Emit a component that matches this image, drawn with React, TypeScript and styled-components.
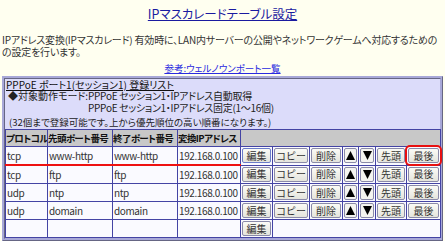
import React from "react";
import styled, { createGlobalStyle } from "styled-components";

const Global = createGlobalStyle`
  html, body { margin: 0; padding: 0; background: #fffff0; }
  body {
    font-family: "Noto Sans CJK JP", "Noto Sans", sans-serif;
    font-feature-settings: "palt";
    color: #333;
    width: 445px;
    overflow: hidden;
  }
`;

const Page = styled.div`
  padding: 0 2px;
  display: flex;
  flex-direction: column;
`;

const Title = styled.a`
  align-self: center;
  margin-top: 6px;
  font-size: 12.5px;
  line-height: 16px;
  color: #1a1aa0;
  text-decoration: underline;
`;

const Desc = styled.p`
  margin: 12px 0 0;
  font-size: 10px;
  line-height: 12px;
  letter-spacing: -0.2px;
  white-space: nowrap;
`;

const RefLink = styled.a`
  align-self: center;
  margin-top: 4px;
  font-size: 9.5px;
  line-height: 12px;
  color: #2a2ae0;
  text-decoration: underline;
`;

const Panel = styled.div`
  margin-top: 2px;
  border: 3px ridge #a8a8d8;
  background: #dcdcfa;
  display: flex;
  flex-direction: column;
`;

const PanelHead = styled.div`
  align-self: flex-start;
  padding: 0 0 0 1px;
  font-size: 10px;
  line-height: 11px;
  color: #111;
  text-decoration: underline;
`;

const ModeGrid = styled.div`
  display: grid;
  grid-template-columns: auto auto;
  justify-content: start;
  padding-left: 3px;
  font-size: 10px;
  line-height: 12px;
  color: #222;
`;

const ModeValue = styled.div<{ $row: number }>`
  grid-column: 2;
  grid-row: ${(p) => p.$row};
  letter-spacing: -0.3px;
`;

const Note = styled.div`
  padding: 2px 0 1px 4px;
  font-size: 9.5px;
  line-height: 12px;
  color: #222;
`;

const Table = styled.table`
  width: 100%;
  table-layout: fixed;
  border-collapse: collapse;
  border: 1px solid #4444a4;
`;

const Th = styled.th`
  background: #c8c8c8;
  border: 1px solid #4444a4;
  font-size: 9.5px;
  letter-spacing: -0.6px;
  font-weight: bold;
  color: #111;
  text-align: left;
  padding: 0;
  height: 16px;
  white-space: nowrap;
  overflow: hidden;
`;

const Td = styled.td<{ $mark?: boolean }>`
  background: #fafaff;
  border: 1px solid #4444a4;
  ${(p) => (p.$mark ? "border-bottom: 2px solid #ee1111;" : "")}
  font-size: 10px;
  letter-spacing: -0.4px;
  color: #333;
  padding: 0 0 0 1px;
  height: 17px;
  white-space: nowrap;
  overflow: hidden;
`;

const BtnCell = styled.td`
  background: #fafaff;
  border: 1px solid #4444a4;
  padding: 0 1px;
  height: 17px;
  text-align: center;
`;

const Btn = styled.button<{ $hot?: boolean; $focus?: boolean }>`
  font-family: "Noto Sans CJK JP", sans-serif;
  font-size: 10px;
  line-height: 12px;
  height: 15px;
  width: 100%;
  padding: 0;
  color: #333;
  background: linear-gradient(#fbfbf6, #e4e4dc);
  border: 1px solid ${(p) => (p.$focus ? "#6a7cc8" : "#8a8aa8")};
  border-radius: 2px;
  display: flex;
  align-items: center;
  justify-content: center;
  ${(p) => (p.$hot ? "outline: 2px solid #e81010; outline-offset: 1px;" : "")}
`;

const ArrowBtn = styled(Btn)`
  background: #f4f4f0;
`;

const Tri = ({ up }: { up?: boolean }) => (
  <svg width="9" height="9" viewBox="0 0 9 9">
    <polygon points={up ? "4.5,0 9,9 0,9" : "0,0 9,0 4.5,9"} fill="#000" />
  </svg>
);

const rows = [
  ["tcp", "www-http", "www-http", "192.168.0.100"],
  ["tcp", "ftp", "ftp", "192.168.0.100"],
  ["udp", "ntp", "ntp", "192.168.0.100"],
  ["udp", "domain", "domain", "192.168.0.100"],
];

const widths = [42, 65, 65, 63, 32, 37, 33, 16, 17, 31, 34];

export default function App() {
  return (
    <>
      <Global />
      <Page>
        <Title>IPマスカレードテーブル設定</Title>
        <Desc>
          IPアドレス変換(IPマスカレード) 有効時に、LAN内サーバーの公開やネットワークゲームへ対応するための
          <br />
          の設定を行います。
        </Desc>
        <RefLink>参考:ウェルノウンポート一覧</RefLink>
        <Panel>
          <PanelHead>PPPoE ポート1(セッション1) 登録リスト</PanelHead>
          <ModeGrid>
            <div>◆対象動作モード:</div>
            <ModeValue $row={1}>PPPoE セッション1・IPアドレス自動取得</ModeValue>
            <ModeValue $row={2}>PPPoE セッション1・IPアドレス固定(1～16個)</ModeValue>
          </ModeGrid>
          <Note>(32個まで登録可能です。上から優先順位の高い順番になります。)</Note>
          <Table>
            <colgroup>
              {widths.map((w, i) => (
                <col key={i} style={{ width: w }} />
              ))}
            </colgroup>
            <thead>
              <tr>
                <Th>プロトコル</Th>
                <Th>先頭ポート番号</Th>
                <Th>終了ポート番号</Th>
                <Th>変換IPアドレス</Th>
                <Th colSpan={7}></Th>
              </tr>
            </thead>
            <tbody>
              {rows.map((r, i) => (
                <tr key={i}>
                  {r.map((c, j) => (
                    <Td key={j} $mark={i === 0}>
                      {c}
                    </Td>
                  ))}
                  <BtnCell><Btn $focus={i === 0}>編集</Btn></BtnCell>
                  <BtnCell><Btn>コピー</Btn></BtnCell>
                  <BtnCell><Btn>削除</Btn></BtnCell>
                  <BtnCell><ArrowBtn><Tri up /></ArrowBtn></BtnCell>
                  <BtnCell><ArrowBtn><Tri /></ArrowBtn></BtnCell>
                  <BtnCell><Btn>先頭</Btn></BtnCell>
                  <BtnCell><Btn $hot={i === 0}>最後</Btn></BtnCell>
                </tr>
              ))}
              <tr>
                <Td></Td>
                <Td></Td>
                <Td></Td>
                <Td></Td>
                <BtnCell><Btn>編集</Btn></BtnCell>
                <Td colSpan={6}></Td>
              </tr>
            </tbody>
          </Table>
        </Panel>
      </Page>
    </>
  );
}
